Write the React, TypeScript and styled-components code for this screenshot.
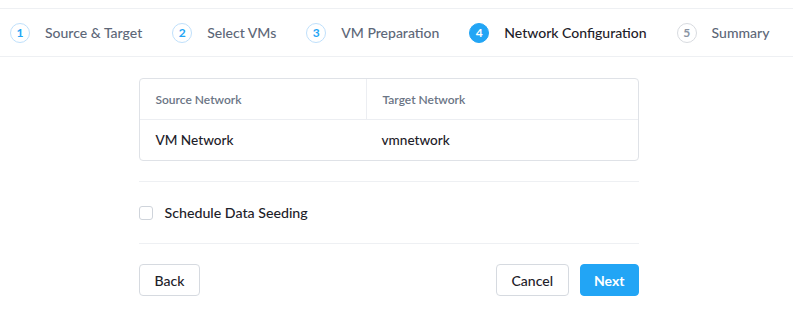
import React, { useState } from 'react';
import styled, { createGlobalStyle } from 'styled-components';

const GlobalStyle = createGlobalStyle`
  html, body {
    margin: 0;
    padding: 0;
    background: #ffffff;
  }
  body {
    font-family: Lato, "Open Sans", "Liberation Sans", sans-serif;
    color: #22272e;
  }
`;

const Page = styled.div`
  width: 777px;
  padding-top: 8px;
`;

const Stepper = styled.ol`
  display: flex;
  align-items: center;
  gap: 30px;
  height: 49px;
  margin: 0;
  padding: 0 0 0 10px;
  list-style: none;
  border-top: 1px solid #eef0f3;
  border-bottom: 1px solid #eef0f3;
  width: 793px;
  box-sizing: border-box;
`;

const Step = styled.li`
  display: flex;
  align-items: center;
  gap: 15px;
  white-space: nowrap;
`;

const StepNum = styled.span<{ $state: 'done' | 'active' | 'todo' }>`
  width: 20px;
  height: 20px;
  box-sizing: border-box;
  border-radius: 50%;
  display: flex;
  align-items: center;
  justify-content: center;
  font-size: 12px;
  font-weight: 700;
  background: ${({ $state }) => ($state === 'active' ? '#22a5f5' : '#ffffff')};
  border: 1px solid
    ${({ $state }) => ($state === 'active' ? '#22a5f5' : $state === 'done' ? '#bfe0fb' : '#d8dbe0')};
  color: ${({ $state }) => ($state === 'active' ? '#ffffff' : $state === 'done' ? '#22a5f5' : '#8a94a3')};
`;

const StepLabel = styled.span<{ $active?: boolean }>`
  font-size: 14px;
  font-weight: 500;
  color: ${({ $active }) => ($active ? '#1d2129' : '#5d6778')};
`;

const Content = styled.div`
  width: 500px;
  margin: 21px auto 0;
`;

const Table = styled.div`
  border: 1px solid #dfe2e7;
  border-radius: 4px;
  overflow: hidden;
`;

const Row = styled.div<{ $head?: boolean }>`
  display: grid;
  grid-template-columns: 226px 1fr;
  height: 40px;
  border-bottom: ${({ $head }) => ($head ? '1px solid #eceef2' : 'none')};
`;

const Cell = styled.div<{ $head?: boolean; $split?: boolean }>`
  display: flex;
  align-items: center;
  padding-left: 16px;
  font-size: ${({ $head }) => ($head ? '12px' : '13.6px')};
  font-weight: ${({ $head }) => ($head ? 600 : 500)};
  color: ${({ $head }) => ($head ? '#6b7585' : '#1d2129')};
  border-left: ${({ $split }) => ($split ? '1px solid #eceef2' : 'none')};
`;

const Divider = styled.hr<{ $gap?: number }>`
  border: none;
  border-top: 1px solid #eef0f3;
  margin: ${({ $gap }) => $gap ?? 0}px 0 0;
`;

const CheckRow = styled.label`
  display: flex;
  align-items: center;
  gap: 12px;
  height: 61px;
  font-size: 14.2px;
  font-weight: 500;
  color: #1d2129;
  cursor: pointer;
`;

const Box = styled.span<{ $checked: boolean }>`
  width: 14px;
  height: 14px;
  box-sizing: border-box;
  border: 1px solid #cfd4db;
  border-radius: 3px;
  background: ${({ $checked }) => ($checked ? '#22a5f5' : '#fff')};
`;

const Actions = styled.div`
  display: flex;
  align-items: center;
  gap: 11px;
  margin-top: 20px;
`;

const Spacer = styled.div`
  flex: 1;
`;

const Button = styled.button<{ $primary?: boolean }>`
  height: 32px;
  padding: 0 ${({ $primary }) => ($primary ? 13 : 15)}px;
  border-radius: 4px;
  font-family: inherit;
  font-size: 14px;
  font-weight: ${({ $primary }) => ($primary ? 700 : 500)};
  cursor: pointer;
  border: 1px solid ${({ $primary }) => ($primary ? '#22a5f5' : '#d6dae0')};
  background: ${({ $primary }) => ($primary ? '#22a5f5' : '#ffffff')};
  color: ${({ $primary }) => ($primary ? '#ffffff' : '#1d2129')};
`;

const steps = ['Source & Target', 'Select VMs', 'VM Preparation', 'Network Configuration', 'Summary'];
const current = 3;

export default function App() {
  const [seed, setSeed] = useState(false);

  return (
    <Page>
      <GlobalStyle />
      <Stepper>
        {steps.map((s, i) => (
          <Step key={s}>
            <StepNum $state={i < current ? 'done' : i === current ? 'active' : 'todo'}>{i + 1}</StepNum>
            <StepLabel $active={i === current}>{s}</StepLabel>
          </Step>
        ))}
      </Stepper>
      <Content>
        <Table>
          <Row $head>
            <Cell $head>Source Network</Cell>
            <Cell $head $split>Target Network</Cell>
          </Row>
          <Row>
            <Cell>VM Network</Cell>
            <Cell>vmnetwork</Cell>
          </Row>
        </Table>
        <Divider $gap={20} />
        <CheckRow onClick={() => setSeed(!seed)}>
          <Box $checked={seed} />
          Schedule Data Seeding
        </CheckRow>
        <Divider />
        <Actions>
          <Button>Back</Button>
          <Spacer />
          <Button>Cancel</Button>
          <Button $primary>Next</Button>
        </Actions>
      </Content>
    </Page>
  );
}
